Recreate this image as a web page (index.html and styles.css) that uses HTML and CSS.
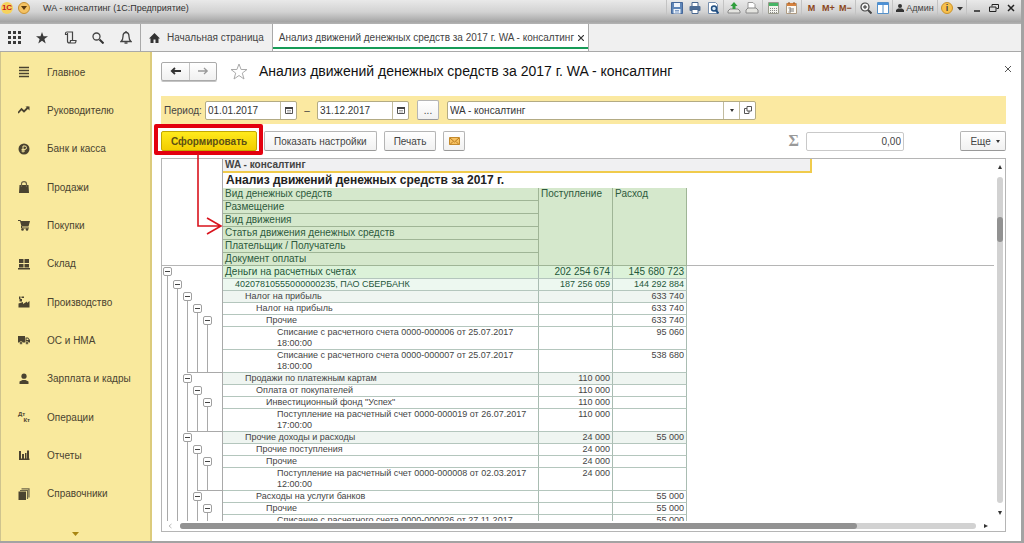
FILE: index.html
```html
<!DOCTYPE html>
<html lang="ru">
  <head>
    <meta charset="utf-8">
    <title>WA - консалтинг (1С:Предприятие)</title>
    <link rel="stylesheet" href="styles.css">
  </head>
  <body>
    <div class="app">

      <header class="titlebar">
        <span class="logo">1C</span>
        <button class="app-menu" aria-label="Меню"><svg width="6" height="4" viewBox="0 0 6 4"><path d="M0 0h6L3 4z" fill="#5a3a10"/></svg></button>
        <span class="app-name">WA - консалтинг (1С:Предприятие)</span>
        <div class="tool-group wide">
          <button class="tool" aria-label="Сохранить"><svg width="12" height="12" viewBox="0 0 12 12"><path d="M.5.5h11v11H.5z" fill="#5f86b8" stroke="#46689a"/><path d="M3 1h6v4H3zM2.500 7h7v4.500h-7z" fill="#eef3fa"/><path d="M4 8.500h4M4 10h4" stroke="#7f9cc4"/></svg></button>
          <button class="tool" aria-label="Печать"><svg width="12" height="12" viewBox="0 0 12 12"><path d="M3 4V.5h6V4" fill="#fff" stroke="#49678e"/><rect x=".5" y="4" width="11" height="5" rx="1" fill="#4d6c94"/><path d="M3 7.500h6v4H3z" fill="#fff" stroke="#49678e"/></svg></button>
          <button class="tool" aria-label="Просмотр"><svg width="12" height="12" viewBox="0 0 12 12"><path d="M1.500.5h7l2 2v9h-9z" fill="#fff" stroke="#7890ae"/><circle cx="7" cy="6.500" r="2.500" fill="#d5e8f7" stroke="#1f4d80" stroke-width="1.500"/><path d="M9 8.500l2.500 3" stroke="#1f4d80" stroke-width="2"/></svg></button>
        </div>
        <div class="tool-group wide">
          <button class="tool" aria-label="Добавить в избранное"><svg width="14" height="12" viewBox="0 0 14 12"><path d="M1 11V9l2-2h8l2 2v2z" fill="#e4e4e0" stroke="#888"/><path d="M7 0l3.500 4H8.500v3h-3V4H3.500z" fill="#2f9e3c"/></svg></button>
          <button class="tool" aria-label="Ссылка"><svg width="14" height="12" viewBox="0 0 14 12"><path d="M3 7V.5h5l2 2V7" fill="#fff" stroke="#999"/><path d="M1 11V8l2-2h8l2 2v3z" fill="#e4e4e0" stroke="#888"/></svg></button>
        </div>
        <div class="tool-group wide">
          <button class="tool" aria-label="Калькулятор"><svg width="11" height="12" viewBox="0 0 11 12"><path d="M.5.5h10v11H.5z" fill="#f4f4ee" stroke="#9a9a8c"/><path d="M1 1h9v3H1z" fill="#47b566"/><path d="M2 6.500h7M2 8.500h7M2 10.500h7" stroke="#888" stroke-dasharray="1 1"/></svg></button>
          <button class="tool" aria-label="Календарь"><svg width="11" height="12" viewBox="0 0 11 12"><path d="M.5 1.500h10v10H.5z" fill="#fdfaf4" stroke="#ad9a82"/><path d="M1 1h9v3H1z" fill="#d58240"/><path d="M3 0v2M8 0v2" stroke="#8d5223"/><path d="M2.500 6H5v4H2.500M3 8h2M7 6v4" fill="none" stroke="#777"/></svg></button>
        </div>
        <div class="tool-group">
          <button class="tool memory">M</button>
          <button class="tool memory">M+</button>
          <button class="tool memory">M−</button>
        </div>
        <div class="tool-group">
          <button class="tool" aria-label="Масштаб"><svg width="12" height="12" viewBox="0 0 12 12"><circle cx="5" cy="5" r="4" fill="#f4f4f4" stroke="#444" stroke-width="1.200"/><path d="M3 5h4M5 3v4" stroke="#333"/><path d="M8 8l3.500 3.500" stroke="#444" stroke-width="2"/></svg></button>
          <button class="tool" aria-label="Панели"><svg width="12" height="12" viewBox="0 0 12 12"><path d="M.5.5h11v11H.5z" fill="#fff" stroke="#5590c8"/><path d="M1 2h10" stroke="#4a90d8" stroke-width="2"/><path d="M6 2v9" stroke="#5590c8"/></svg></button>
        </div>
        <div class="tool-group">
          <button class="user"><svg width="8" height="8" viewBox="0 0 8 8"><circle cx="4" cy="2" r="2" fill="#333"/><path d="M0 8V6l2-1.500h4L8 6v2z" fill="#333"/></svg>Админ</button>
        </div>
        <div class="tool-group">
          <button class="info" aria-label="Справка">i</button>
          <button class="more" aria-label="Еще"><svg width="6" height="6" viewBox="0 0 6 6"><path d="M0 2h6L3 5.500z" fill="#333"/></svg></button>
        </div>
        <div class="tool-group">
          <button class="window" aria-label="Свернуть"><svg width="10" height="10" viewBox="0 0 10 10"><path d="M2 8h6" stroke="#222" stroke-width="1.500"/></svg></button>
          <button class="window" aria-label="Восстановить"><svg width="10" height="10" viewBox="0 0 10 10"><path d="M3 3.500v-2h6.500v4h-2M.5 4h6.500v4.500H.5z" fill="none" stroke="#222"/></svg></button>
          <button class="window" aria-label="Закрыть"><svg width="10" height="10" viewBox="0 0 10 10"><path d="M2 2l6 6M8 2L2 8" stroke="#222" stroke-width="1.500"/></svg></button>
        </div>
      </header>

      <nav class="tabbar">
        <button class="shortcut" aria-label="Функции"><svg width="13" height="13" viewBox="0 0 13 13"><path d="M0 1.500h13M0 6.500h13M0 11.500h13" stroke="#3a3a3a" stroke-width="3" stroke-dasharray="3 2"/></svg></button>
        <button class="shortcut" aria-label="Избранное"><svg width="12" height="12" viewBox="0 0 12 12"><path d="M6 0l1.500 4.200H12L8.400 7l1.300 4.500L6 8.800l-3.700 2.700L3.600 7 0 4.200h4.500z" fill="#3a3a3a"/></svg></button>
        <button class="shortcut" aria-label="История"><svg width="13" height="13" viewBox="0 0 13 13"><path d="M3.500 3.500h-2v-1q0-1.500 1.500-1.500h5.500v8M3.500 2v8q0 2 2 2h5q1.500 0 1.500-2.500H6.500q0 2.500-1.500 2.500" fill="none" stroke="#444" stroke-width="1.200"/></svg></button>
        <button class="shortcut" aria-label="Поиск"><svg width="12" height="12" viewBox="0 0 12 12"><circle cx="4.500" cy="4.500" r="3.500" fill="none" stroke="#444" stroke-width="1.300"/><path d="M7.500 7.500l4 4" stroke="#333" stroke-width="2"/></svg></button>
        <button class="shortcut" aria-label="Уведомления"><svg width="12" height="13" viewBox="0 0 12 13"><path d="M1 10.500h10q-2-1.500-2-5Q9 1.500 6 1.500T3 5.500q0 3.500-2 5z" fill="none" stroke="#444" stroke-width="1.300"/><path d="M6 0v2M4.500 12h3" stroke="#444" stroke-width="1.300"/></svg></button>
        <a class="tab" href="#"><svg width="11" height="10" viewBox="0 0 11 10"><path d="M0 5.500L5.500 0 11 5.500H9.500V10h-3V6.500h-2V10h-3V5.500z" fill="#333"/></svg>Начальная страница</a>
        <a class="tab tab-active" href="#">Анализ движений денежных средств за 2017 г. WA - консалтинг<svg width="6" height="6" viewBox="0 0 6 6"><path d="M0 0l6 6M6 0L0 6" stroke="#333" stroke-width="1.200"/></svg></a>
      </nav>

      <div class="workspace">
        <aside class="sidebar">
          <ul class="sections">
            <li><a href="#"><svg width="12" height="12" viewBox="0 0 12 12"><path d="M1 1.500h10M1 4.500h10M1 7.500h10M1 10.500h10" stroke="#4a4330" stroke-width="1.500"/></svg>Главное</a></li>
            <li><a href="#"><svg width="12" height="12" viewBox="0 0 12 12"><path d="M0 9l3.500-4L6 7.500 10.500 3" fill="none" stroke="#4a4330" stroke-width="1.800"/><path d="M7.500 2.500h4v4z" fill="#4a4330"/></svg>Руководителю</a></li>
            <li><a href="#"><svg width="12" height="12" viewBox="0 0 12 12"><circle cx="6" cy="6" r="5.500" fill="#4a4330"/><path d="M5 9.500V3h2q1.500 0 1.500 1.700T7 6.400H3.500M3.500 8H7" fill="none" stroke="#f9e99d"/></svg>Банк и касса</a></li>
            <li><a href="#"><svg width="12" height="12" viewBox="0 0 12 12"><path d="M1.500 4h9l.5 8H1z" fill="#4a4330"/><path d="M3.500 6V3q0-2.300 2.500-2.300T8.500 3v3" fill="none" stroke="#6a6145" stroke-width="1.200"/></svg>Продажи</a></li>
            <li><a href="#"><svg width="12" height="12" viewBox="0 0 12 12"><path d="M0 1h2.500l.5 1h9l-1.500 5.500h-7L2 2H0z" fill="#4a4330"/><path d="M3.500 7v2H11" fill="none" stroke="#4a4330"/><circle cx="4.500" cy="10.500" r="1.300" fill="#4a4330"/><circle cx="9" cy="10.500" r="1.300" fill="#4a4330"/></svg>Покупки</a></li>
            <li><a href="#"><svg width="12" height="12" viewBox="0 0 12 12"><path d="M1 1h4.500v4H1zM6.500 1H11v4H6.500zM1 6h4.500v3.500H1zM6.500 6H11v3.500H6.500zM0 10h12v1.500H0z" fill="#4a4330"/></svg>Склад</a></li>
            <li><a href="#"><svg width="12" height="12" viewBox="0 0 12 12"><path d="M.5 11.500v-4L5 6v2l4-2.500v1.500L11.500 5v6.500z" fill="#4a4330"/><path d="M1 .5h1.500V3H1zM3.500.5H6V2H3.500zM1.500 3H4v2.500H1.500z" fill="#4a4330"/></svg>Производство</a></li>
            <li><a href="#"><svg width="12" height="12" viewBox="0 0 12 12"><path d="M0 2h7v6.500H0zM7.500 3.500h2.500l2 2.500v2.500H7.500z" fill="#4a4330"/><path d="M8.500 4.500h1.200l1 1.500H8.500z" fill="#f9e99d"/><circle cx="3" cy="9" r="1.500" fill="#4a4330" stroke="#f9e99d" stroke-width=".6"/><circle cx="9" cy="9" r="1.500" fill="#4a4330" stroke="#f9e99d" stroke-width=".6"/></svg>ОС и НМА</a></li>
            <li><a href="#"><svg width="12" height="12" viewBox="0 0 12 12"><circle cx="6" cy="3.200" r="2.600" fill="#4a4330"/><path d="M1.500 11V8.500L4.500 7h3l3 1.500V11z" fill="#4a4330"/></svg>Зарплата и кадры</a></li>
            <li><a href="#"><span class="dt-kt"><span>Дт</span><span>Кт</span></span>Операции</a></li>
            <li><a href="#"><svg width="12" height="12" viewBox="0 0 12 12"><path d="M1 2h2v8H1zM4 5h2v5H4zM7 4h1.500v6H7zM9 1.500h2V10H9zM1 9.500h10.500V11H1z" fill="#4a4330"/></svg>Отчеты</a></li>
            <li><a href="#"><svg width="12" height="12" viewBox="0 0 12 12"><path d="M.5 3.500h7.500v8.500H.5z" fill="#4a4330"/><path d="M2 2.500h7.500V11M3.500.8h7.500v8.700" fill="none" stroke="#6d6548" stroke-width="1.200"/></svg>Справочники</a></li>
          </ul>
          <button class="sections-more" aria-label="Вниз"><svg width="7" height="4" viewBox="0 0 7 4"><path d="M0 0h7L3.500 4z" fill="#a88612"/></svg></button>
        </aside>

        <main class="content">
          <div class="heading">
            <div class="history">
              <button aria-label="Назад"><svg width="12" height="8" viewBox="0 0 12 8"><path d="M11 4H2M5 1L1.800 4 5 7" fill="none" stroke="#333" stroke-width="1.800"/></svg></button>
              <button aria-label="Вперед"><svg width="12" height="8" viewBox="0 0 12 8"><path d="M1 4h9M7 1l3.200 3L7 7" fill="none" stroke="#999" stroke-width="1.300"/></svg></button>
            </div>
            <svg width="18" height="17" viewBox="0 0 18 17"><path d="M9 1l2.100 5.500H17l-4.700 3.600L14 16l-5-3.500L4 16l1.700-5.900L1 6.500h5.900z" fill="#fff" stroke="#aaa"/></svg>
            <h1>Анализ движений денежных средств за 2017 г. WA - консалтинг</h1>
            <button class="close" aria-label="Закрыть"><svg width="6" height="6" viewBox="0 0 6 6"><path d="M0 0l6 6M6 0L0 6" stroke="#555"/></svg></button>
          </div>

          <div class="filters">
            <label for="date-from">Период:</label>
            <div class="field date">
              <input id="date-from" type="text" value="01.01.2017">
              <button aria-label="Выбрать дату"><svg width="8" height="8" viewBox="0 0 8 8"><path d="M.5 1.500h7v6h-7z" fill="#fff" stroke="#555"/><path d="M0 1h8v2H0z" fill="#444"/><path d="M2 4.500h4M2 6h4" stroke="#aaa"/></svg></button>
            </div>
            <span class="dash">–</span>
            <div class="field date">
              <input id="date-to" type="text" value="31.12.2017" aria-label="Конец периода">
              <button aria-label="Выбрать дату"><svg width="8" height="8" viewBox="0 0 8 8"><path d="M.5 1.500h7v6h-7z" fill="#fff" stroke="#555"/><path d="M0 1h8v2H0z" fill="#444"/><path d="M2 4.500h4M2 6h4" stroke="#aaa"/></svg></button>
            </div>
            <button class="button square">...</button>
            <div class="field company">
              <select aria-label="Организация">
                <option>WA - консалтинг</option>
              </select>
              <span class="arrow-cell"><svg width="4" height="3" viewBox="0 0 4 3"><path d="M0 0h4L2 3z" fill="#333"/></svg></span>
              <button aria-label="Открыть"><svg width="8" height="8" viewBox="0 0 8 8"><path d="M3 .5h4.500V5H3zM3 2.500H.5v5H5V5" fill="none" stroke="#555"/></svg></button>
            </div>
          </div>

          <div class="commands">
            <div class="marked">
              <button class="button primary">Сформировать</button>
              <svg class="pointer" width="28" height="84" viewBox="0 0 28 84"><path d="M2 0v72h23M11 64l14 8-14 8" fill="none" stroke="#d9131d" stroke-width="1.600"/></svg>
            </div>
            <button class="button">Показать настройки</button>
            <button class="button">Печать</button>
            <button class="button square" aria-label="Отправить"><svg width="11" height="8" viewBox="0 0 11 8"><path d="M.5.5h10v7H.5z" fill="#f6c060" stroke="#c48a2c"/><path d="M1 1l4.500 4L10 1M1 7.500l3-3M10 7.500l-3-3" fill="none" stroke="#b87b20"/></svg></button>
            <label class="sigma" for="sum">Σ</label>
            <input class="sum" id="sum" type="text" value="0,00" readonly>
            <button class="button extra">Еще <svg width="4" height="3" viewBox="0 0 4 3"><path d="M0 0h4L2 3z" fill="#333"/></svg></button>
          </div>

          <div class="report">
            <div class="sheet">
              <table>
                <colgroup>
                  <col class="c-level" span="5">
                  <col class="c-gutter">
                  <col class="c-name">
                  <col class="c-sum" span="2">
                  <col class="c-tail">
                  <col>
                </colgroup>
                <thead>
                  <tr>
                    <td class="gutter frozen" colspan="6" rowspan="8"></td>
                    <td class="firm" colspan="4">WA - консалтинг</td>
                    <td></td>
                  </tr>
                  <tr><td class="caption" colspan="5">Анализ движений денежных средств за 2017 г.</td></tr>
                  <tr>
                    <th>Вид денежных средств</th>
                    <th rowspan="6">Поступление</th>
                    <th rowspan="6">Расход</th>
                    <td class="frozen" colspan="2" rowspan="6"></td>
                  </tr>
                  <tr><th>Размещение</th></tr>
                  <tr><th>Вид движения</th></tr>
                  <tr><th>Статья движения денежных средств</th></tr>
                  <tr><th>Плательщик / Получатель</th></tr>
                  <tr><th>Документ оплаты</th></tr>
                </thead>
                <tbody>
                  <tr class="l1">
                    <td class="group" rowspan="18"><button aria-label="Свернуть"></button></td>
                    <td class="gutter" colspan="5"></td>
                    <td>Деньги на расчетных счетах</td><td>202 254 674</td><td>145 680 723</td>
                  </tr>
                  <tr class="l2">
                    <td class="group" rowspan="17"><button aria-label="Свернуть"></button></td>
                    <td class="gutter" colspan="4"></td>
                    <td>40207810555000000235, ПАО СБЕРБАНК</td><td>187 256 059</td><td>144 292 884</td>
                  </tr>
                  <tr class="l3">
                    <td class="group ends" rowspan="5"><button aria-label="Свернуть"></button></td>
                    <td class="gutter" colspan="3"></td>
                    <td>Налог на прибыль</td><td></td><td>633 740</td>
                  </tr>
                  <tr class="l4">
                    <td class="group joins" rowspan="4"><button aria-label="Свернуть"></button></td>
                    <td class="gutter" colspan="2"></td>
                    <td>Налог на прибыль</td><td></td><td>633 740</td>
                  </tr>
                  <tr class="l5">
                    <td class="group joins" rowspan="3"><button aria-label="Свернуть"></button></td>
                    <td class="gutter"></td>
                    <td>Прочие</td><td></td><td>633 740</td>
                  </tr>
                  <tr class="l6">
                    <td class="gutter"></td>
                    <td>Списание с расчетного счета 0000-000006 от 25.07.2017 18:00:00</td><td></td><td>95 060</td>
                  </tr>
                  <tr class="l6">
                    <td class="gutter joins"></td>
                    <td>Списание с расчетного счета 0000-000007 от 25.07.2017 18:00:00</td><td></td><td>538 680</td>
                  </tr>
                  <tr class="l3">
                    <td class="group ends" rowspan="4"><button aria-label="Свернуть"></button></td>
                    <td class="gutter" colspan="3"></td>
                    <td>Продажи по платежным картам</td><td>110 000</td><td></td>
                  </tr>
                  <tr class="l4">
                    <td class="group joins" rowspan="3"><button aria-label="Свернуть"></button></td>
                    <td class="gutter" colspan="2"></td>
                    <td>Оплата от покупателей</td><td>110 000</td><td></td>
                  </tr>
                  <tr class="l5">
                    <td class="group joins" rowspan="2"><button aria-label="Свернуть"></button></td>
                    <td class="gutter"></td>
                    <td>Инвестиционный фонд "Успех"</td><td>110 000</td><td></td>
                  </tr>
                  <tr class="l6">
                    <td class="gutter joins"></td>
                    <td>Поступление на расчетный счет 0000-000019 от 26.07.2017 17:00:00</td><td>110 000</td><td></td>
                  </tr>
                  <tr class="l3">
                    <td class="group" rowspan="7"><button aria-label="Свернуть"></button></td>
                    <td class="gutter" colspan="3"></td>
                    <td>Прочие доходы и расходы</td><td>24 000</td><td>55 000</td>
                  </tr>
                  <tr class="l4">
                    <td class="group ends" rowspan="3"><button aria-label="Свернуть"></button></td>
                    <td class="gutter" colspan="2"></td>
                    <td>Прочие поступления</td><td>24 000</td><td></td>
                  </tr>
                  <tr class="l5">
                    <td class="group joins" rowspan="2"><button aria-label="Свернуть"></button></td>
                    <td class="gutter"></td>
                    <td>Прочие</td><td>24 000</td><td></td>
                  </tr>
                  <tr class="l6">
                    <td class="gutter joins"></td>
                    <td>Поступление на расчетный счет 0000-000008 от 02.03.2017 12:00:00</td><td>24 000</td><td></td>
                  </tr>
                  <tr class="l4">
                    <td class="group" rowspan="3"><button aria-label="Свернуть"></button></td>
                    <td class="gutter" colspan="2"></td>
                    <td>Расходы на услуги банков</td><td></td><td>55 000</td>
                  </tr>
                  <tr class="l5">
                    <td class="group" rowspan="2"><button aria-label="Свернуть"></button></td>
                    <td class="gutter"></td>
                    <td>Прочие</td><td></td><td>55 000</td>
                  </tr>
                  <tr class="l6">
                    <td class="gutter"></td>
                    <td>Списание с расчетного счета 0000-000026 от 27.11.2017</td><td></td><td>55 000</td>
                  </tr>
                </tbody>
              </table>
            </div>
            <div class="vscroll">
              <svg width="6" height="4" viewBox="0 0 6 4"><path d="M1 4h4L3 0z" fill="#333"/></svg>
              <div class="track"><div class="thumb"></div></div>
              <svg width="6" height="4" viewBox="0 0 6 4"><path d="M1 0h4L3 4z" fill="#333"/></svg>
            </div>
            <div class="hscroll">
              <svg width="4" height="6" viewBox="0 0 4 6"><path d="M3.500 1L1 3l2.500 2" fill="none" stroke="#bbb"/></svg>
              <div class="track"><div class="thumb"></div></div>
              <svg width="4" height="6" viewBox="0 0 4 6"><path d="M0 1v4l4-2z" fill="#333"/></svg>
            </div>
          </div>
        </main>
      </div>
    </div>
  </body>
</html>
```

FILE: styles.css
```css
* {
  box-sizing: border-box;
}

body {
  margin: 0;
  font-family: "Liberation Sans", Arial, sans-serif;
  font-size: 10px;
  color: #444;
  background-color: white;
}

button,
input,
select {
  font: inherit;
  color: inherit;
  margin: 0;
  padding: 0;
  border: none;
  background: none;
}

a {
  color: inherit;
  text-decoration: none;
}

svg {
  flex: none;
}

.app {
  display: flex;
  flex-direction: column;
  height: 100vh;
  border-right: 3px solid #a3a3a3;
  border-bottom: 2px solid #a3a3a3;
}

/* window title */
.titlebar {
  display: flex;
  align-items: center;
  height: 24px;
  padding: 0 1px 8px 1px;
  flex: none;
  background: linear-gradient(#e9e9e9, #d2d2d2 50%, #a6a6a6 90%, #b4b4b4);
}

.titlebar button {
  display: flex;
  align-items: center;
  justify-content: center;
  height: 16px;
}

.logo {
  width: 12px;
  height: 12px;
  border-radius: 6px;
  background-color: #f6d25c;
  color: #c8191c;
  font-size: 8px;
  font-weight: bold;
  line-height: 12px;
  text-align: center;
}

.titlebar .app-menu {
  width: 12px;
  height: 12px;
  margin-left: 5px;
  border: 1px solid #c58f33;
  border-radius: 6px;
  background-color: #f5c262;
}

.app-name {
  margin-left: 13px;
  margin-right: auto;
  font-size: 9px;
  color: #333;
}

.tool-group {
  display: flex;
  padding: 0 1px;
  border-left: 1px solid #c3c3c3;
}

.titlebar .tool {
  width: 17px;
}

.titlebar .wide .tool {
  width: 18px;
}

.titlebar .memory {
  font-size: 9px;
  font-weight: bold;
  color: #8a4520;
}

.titlebar .user {
  gap: 2px;
  width: 42px;
  font-size: 9px;
}

.titlebar .info {
  width: 12px;
  height: 12px;
  margin: 2px;
  border: 1px solid #c9922c;
  border-radius: 6px;
  background-color: #f7c04c;
  font-size: 9px;
  font-weight: bold;
}

.titlebar .more {
  width: 10px;
}

.titlebar .window {
  width: 17px;
}

/* open pages */
.tabbar {
  display: flex;
  height: 28px;
  flex: none;
  background-color: #f0f0f0;
  border-bottom: 1px solid #a9a9a9;
}

.shortcut {
  display: flex;
  align-items: center;
  justify-content: center;
  width: 28px;
}

.tab {
  display: flex;
  align-items: center;
  gap: 7px;
  padding: 0 8px;
  border-left: 1px solid #a9a9a9;
}

.tab-active {
  gap: 4px;
  padding: 0 4px 0 6px;
  background-color: white;
  border-right: 1px solid #a9a9a9;
  box-shadow: inset 0 -2px white, inset 0 -4px #169b57;
}

.workspace {
  display: flex;
  flex: 1;
  min-height: 0;
}

/* sections panel */
.sidebar {
  display: flex;
  flex-direction: column;
  width: 152px;
  flex: none;
  background-color: #f9e99d;
  border-left: 1px solid #cfc48e;
  border-right: 2px solid #dccb7c;
}

.sections {
  display: flex;
  flex-direction: column;
  flex: 1;
  margin: 0;
  padding: 1px 0 0;
  list-style: none;
}

.sections li {
  display: flex;
  flex: 1;
}

.sections a {
  display: flex;
  align-items: center;
  flex: 1;
  gap: 17px;
  padding-left: 17px;
  color: #4a4330;
}

.dt-kt {
  display: flex;
  flex-direction: column;
  width: 12px;
  font-size: 6px;
  font-weight: bold;
  line-height: 6px;
}

.dt-kt span + span {
  text-align: right;
}

.sections-more {
  height: 28px;
  padding-top: 10px;
}

/* page */
.content {
  display: flex;
  flex-direction: column;
  flex: 1;
  min-width: 0;
  padding: 0 15px 9px 9px;
}

.heading {
  display: flex;
  align-items: center;
  height: 44px;
  padding-bottom: 6px;
  flex: none;
}

.history {
  display: flex;
  margin-right: 13px;
  border: 1px solid #aaa;
  border-radius: 2px;
  background: linear-gradient(white, #f0f0f0);
  box-shadow: 0 1px #c4c4c4;
}

.history button {
  width: 27px;
  height: 17px;
}

.history button + button {
  border-left: 1px solid #c4c4c4;
}

h1 {
  margin: 0 auto 0 11px;
  font-size: 14px;
  font-weight: normal;
  color: #111;
}

.close {
  height: 16px;
  margin: 0 -5px 6px 0;
}

.filters {
  display: flex;
  align-items: center;
  height: 28px;
  padding-left: 3px;
  flex: none;
  background-color: #fbe9a1;
}

.filters label {
  width: 41px;
}

.field {
  display: flex;
  position: relative;
  height: 19px;
  border: 1px solid #b3ab84;
  border-radius: 2px;
  background-color: white;
}

.field input,
.field select {
  flex: 1;
  min-width: 0;
  padding-left: 2px;
  appearance: none;
  color: #333;
}

.field button,
.arrow-cell {
  display: flex;
  align-items: center;
  justify-content: center;
  width: 16px;
  border-left: 1px solid #c2bc9f;
}

.date {
  width: 92px;
}

.dash {
  width: 20px;
  text-align: center;
}

.company {
  flex: 0 1 309px;
}

/* the arrow lies over the right end of the select */
.company select {
  padding-right: 16px;
}

.arrow-cell {
  position: absolute;
  top: 0;
  right: 16px;
  height: 17px;
  pointer-events: none;
}

.button {
  height: 20px;
  padding: 0 9px;
  border: 1px solid #b5b5b5;
  border-bottom-color: #999;
  border-radius: 2px;
  background: linear-gradient(white, #f1f1f1);
}

.square {
  width: 22px;
  padding: 0;
}

.filters .square {
  margin: 0 8px;
}

.commands {
  display: flex;
  align-items: center;
  gap: 7px;
  padding: 7px 0;
  flex: none;
}

.marked {
  position: relative;
}

.marked::after {
  content: "";
  position: absolute;
  top: -7px;
  right: -6px;
  bottom: -4px;
  left: -7px;
  border: 4px solid #e3000f;
  border-radius: 2px;
}

.pointer {
  position: absolute;
  top: 23px;
  left: 35px;
  z-index: 1;
}

.primary {
  width: 96px;
  border-color: #c2a800;
  background: linear-gradient(#ffea1c, #f2cd00);
  font-weight: bold;
  color: #5d5014;
}

.sigma {
  margin-left: auto;
  font-family: "Liberation Serif", serif;
  font-size: 16px;
  font-weight: bold;
  line-height: 16px;
  color: #999;
}

.sum {
  width: 98px;
  height: 19px;
  margin-right: 49px;
  padding: 0 2px;
  border: 1px solid #c9c9c9;
  border-radius: 2px;
  text-align: right;
}

.extra {
  width: 46px;
  padding: 0 0 0 4px;
}

.extra svg {
  margin: 0 0 2px 2px;
}

/* report */
.report {
  display: grid;
  grid-template-columns: 1fr 11px;
  grid-template-rows: 1fr 10px;
  flex: 1;
  min-height: 0;
  border: 1px solid #b5b5b5;
}

.sheet {
  min-height: 0;
  overflow: hidden;
}

table {
  width: 100%;
  table-layout: fixed;
  border-spacing: 0;
  font-size: 9px;
  line-height: 11px;
}

.c-level {
  width: 10px;
}

.c-gutter {
  width: 11px;
}

.c-name {
  width: 316px;
}

.c-sum {
  width: 74px;
}

.c-tail {
  width: 125px;
}

th,
td {
  padding: 0;
  vertical-align: top;
}

td.gutter {
  border-right: 1px solid #a9a9a9;
}

td.frozen {
  border-bottom: 1px solid #b5b5b5;
}

.firm {
  padding: 0 2px;
  border-right: 2px solid #f0cb4c;
  border-bottom: 2px solid #f0cb4c;
  background-color: #f0f0f2;
  font-size: 10px;
  font-weight: bold;
  line-height: 12px;
}

.caption {
  padding-left: 3px;
  font-size: 12px;
  font-weight: bold;
  line-height: 15px;
  color: #222;
}

th {
  padding: 0 2px;
  border-right: 1px solid #9fb596;
  border-bottom: 1px solid #9fb596;
  background-color: #d5e8cc;
  font-size: 10px;
  font-weight: normal;
  line-height: 12px;
  text-align: left;
  color: #2d5a3c;
}

tbody td:not(.group, .gutter) {
  padding-right: 2px;
  border-right: 1px solid #a9bcb2;
  border-bottom: 1px solid #b4c6bd;
  text-align: right;
}

tbody .gutter + td:not(.group) {
  text-align: left;
}

.l1 td:not(.group, .gutter) {
  background-color: #dcf2d9;
  font-size: 10px;
  line-height: 12px;
  color: #24573a;
}

.l2 td:not(.group, .gutter) {
  background-color: #edf8f0;
  color: #24573a;
}

.l3 td:not(.group, .gutter) {
  background-color: #eff5f1;
}

.l1 .gutter + td {
  padding-left: 2px;
}

.l2 .gutter + td {
  padding-left: 12px;
}

.l3 .gutter + td {
  padding-left: 22px;
}

.l4 .gutter + td {
  padding-left: 33px;
}

.l5 .gutter + td {
  padding-left: 43px;
}

.l6 .gutter + td {
  padding-left: 54px;
}

/* outline: vertical line under each minus, closed by a line at the group end */
.group {
  background: linear-gradient(#a9a9a9, #a9a9a9) 5px 6px / 1px 100% no-repeat;
}

.group.ends {
  background:
    linear-gradient(#a9a9a9, #a9a9a9) 5px 6px / 1px 100% no-repeat,
    linear-gradient(#a9a9a9, #a9a9a9) 5px 100% / 5px 1px no-repeat;
}

.group.joins {
  background:
    linear-gradient(#a9a9a9, #a9a9a9) 5px 6px / 1px 100% no-repeat,
    linear-gradient(#a9a9a9, #a9a9a9) 0 100% / 100% 1px no-repeat;
}

.gutter.joins {
  border-bottom: 1px solid #a9a9a9;
}

.group button {
  display: block;
  width: 9px;
  height: 9px;
  margin: 1px 0 0 1px;
  border: 1px solid #a0a0a0;
  border-radius: 2px;
  background: linear-gradient(#444, #444) center / 5px 1px no-repeat white;
}

.track {
  flex: 1;
  border-radius: 3px;
  background-color: #d2d2d2;
}

.thumb {
  border-radius: 3px;
  background-color: #929292;
}

.vscroll {
  display: flex;
  flex-direction: column;
  align-items: center;
  gap: 8px;
  padding: 6px 0;
}

.vscroll .track {
  width: 6px;
  padding-top: 40px;
}

.vscroll .thumb {
  height: 25px;
}

.hscroll {
  display: flex;
  align-items: center;
  gap: 8px;
  padding: 0 6px;
}

.hscroll .track,
.hscroll .thumb {
  height: 6px;
}

.hscroll .thumb {
  width: 85%;
}
```
